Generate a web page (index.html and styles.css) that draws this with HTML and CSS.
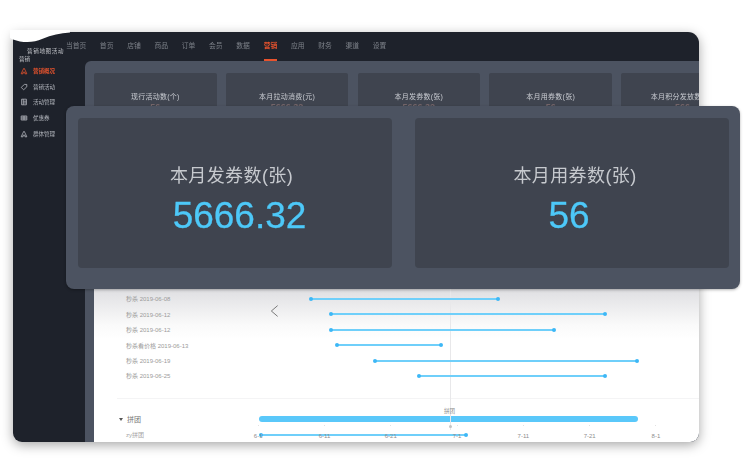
FILE: index.html
```html
<!DOCTYPE html>
<html lang="zh-CN">
<head>
    <meta charset="UTF-8">
    <meta name="viewport" content="width=device-width, initial-scale=1.0">
    <title>营销概况</title>
    <link rel="stylesheet" href="styles.css">
</head>
<body>

<div class="stage">
    <div class="window">
        <aside class="sidebar">
            <div class="brand">
                <div class="brand-name">营销地图活动</div>
                <div class="brand-sub">营销</div>
            </div>
            <ul class="side-menu">
                <li class="side-item active">
                    <svg viewBox="0 0 10 10"><path d="M1.500 8.500 3.500 4 5 1.500 6.500 4 8.500 8.500H6.200V6.500H3.800V8.500Z"/></svg>
                    营销概况
                </li>
                <li class="side-item">
                    <svg viewBox="0 0 10 10"><path d="M1.500 5.500 5.500 1.800H8.500V4.800L4.500 8.500Z"/></svg>
                    营销活动
                </li>
                <li class="side-item">
                    <svg viewBox="0 0 10 10"><path d="M2 1.500H8V8.500H2ZM4 1.500V8.500M4 4H8M4 6.200H8"/></svg>
                    活动管理
                </li>
                <li class="side-item">
                    <svg viewBox="0 0 10 10"><path d="M1.500 2.500H8.500V7.500H1.500ZM4 2.500V7.500M6 2.500V7.500M1.500 5H8.500"/></svg>
                    优惠券
                </li>
                <li class="side-item">
                    <svg viewBox="0 0 10 10"><path d="M1.500 8.500 3.500 4 5 1.500 6.500 4 8.500 8.500H6.200V6.500H3.800V8.500Z"/></svg>
                    群体管理
                </li>
            </ul>
        </aside>

        <div class="main">
            <nav class="top-nav">
                <a class="nav-first">当首页</a>
                <a>首页</a>
                <a>店铺</a>
                <a>商品</a>
                <a>订单</a>
                <a>会员</a>
                <a>数据</a>
                <a class="active">营销</a>
                <a>应用</a>
                <a>财务</a>
                <a>渠道</a>
                <a>设置</a>
            </nav>

            <div class="content">
                <div class="small-cards">
                    <div class="small-card"><p>现行活动数(个)</p><b>56</b></div>
                    <div class="small-card"><p>本月拉动消费(元)</p><b>5666.32</b></div>
                    <div class="small-card"><p>本月发券数(张)</p><b>5666.32</b></div>
                    <div class="small-card"><p>本月用券数(张)</p><b>56</b></div>
                    <div class="small-card"><p>本月积分发放数(分)</p><b>566</b></div>
                </div>

                <section class="chart">
                    <div class="today-line"></div>
                    <span class="today-label">拼团</span>
                    <span class="today-dot"></span>
                    <svg class="chart-back" viewBox="0 0 10 14"><path d="M8.500 1 1.500 7 8.500 13"/></svg>

                    <div class="gantt-list">
                        <div class="gantt-row"><span class="gantt-label">秒杀 2019-06-08</span><div class="track"><i class="bar" style="margin-left:52px;width:187px"></i></div></div>
                        <div class="gantt-row"><span class="gantt-label">秒杀 2019-06-12</span><div class="track"><i class="bar" style="margin-left:72px;width:274px"></i></div></div>
                        <div class="gantt-row"><span class="gantt-label">秒杀 2019-06-12</span><div class="track"><i class="bar" style="margin-left:72px;width:223px"></i></div></div>
                        <div class="gantt-row"><span class="gantt-label">秒杀看价格 2019-06-13</span><div class="track"><i class="bar" style="margin-left:78px;width:104px"></i></div></div>
                        <div class="gantt-row"><span class="gantt-label">秒杀 2019-06-19</span><div class="track"><i class="bar" style="margin-left:116px;width:262px"></i></div></div>
                        <div class="gantt-row"><span class="gantt-label">秒杀 2019-06-25</span><div class="track"><i class="bar" style="margin-left:160px;width:186px"></i></div></div>
                    </div>

                    <div class="gantt-group">
                        <div class="group-row">
                            <span class="group-label"><em></em>拼团</span>
                            <div class="track"><i class="group-bar" style="width:379px"></i></div>
                        </div>
                        <div class="gantt-row sub-row">
                            <span class="gantt-label">zy拼团</span>
                            <div class="track"><i class="bar" style="margin-left:2px;width:205px"></i></div>
                        </div>
                    </div>

                    <div class="axis">
                        <span>6-1</span>
                        <span>6-11</span>
                        <span>6-21</span>
                        <span>7-1</span>
                        <span>7-11</span>
                        <span>7-21</span>
                        <span>8-1</span>
                    </div>
                </section>
            </div>
        </div>
    </div>

    <svg class="corner-patch" viewBox="0 0 60 16"><path d="M0 0H60V2.500C50 3 42 5 32 9 24 13 12 13 3 9.500L0 8Z"/></svg>

    <div class="big-panel">
        <div class="big-card card-issued">
            <p>本月发券数(张)</p>
            <b>5666.32</b>
        </div>
        <div class="big-card card-used">
            <p>本月用券数(张)</p>
            <b>56</b>
        </div>
    </div>
</div>

</body>
</html>
```

FILE: styles.css
```css
* {
    box-sizing: border-box;
}

html, body {
    margin: 0;
    height: 100%;
    background: white;
    overflow: hidden;
}

body {
    font-family: "Liberation Sans", "Noto Sans CJK SC", sans-serif;
}

.stage {
    position: relative;
    width: 750px;
    height: 464px;
    padding: 32px 0 0 13px;
}

/* back window */
.window {
    display: flex;
    width: 686px;
    height: 410px;
    background-color: #1e222b;
    border-radius: 3px 11px 9px 9px;
    box-shadow: 0 3px 12px rgba(0, 0, 0, 0.35);
    overflow: hidden;
    filter: blur(0.6px);
}

.sidebar {
    width: 72px;
    flex: none;
    color: #b5b8bf;
    font-size: 5.5px;
}

.brand {
    height: 31px;
    padding-top: 15px;
}

.brand-name {
    margin-left: 14px;
    line-height: 8px;
    letter-spacing: 0.7px;
    white-space: nowrap;
    color: #c6c8cd;
}

.brand-sub {
    margin-left: 6px;
    line-height: 8px;
    color: #c6c8cd;
}

.side-menu {
    list-style: none;
    margin: 0;
    padding: 0;
}

.side-item {
    display: flex;
    align-items: center;
    gap: 5px;
    height: 15.8px;
    padding-left: 7px;
}

.side-item svg {
    width: 8px;
    height: 8px;
    fill: none;
    stroke: #b5b8bf;
    stroke-width: 1;
}

.side-item.active {
    color: #e8532d;
    font-weight: bold;
}

.side-item.active svg {
    stroke: #e8532d;
}

.main {
    flex: 1;
    min-width: 0;
    display: flex;
    flex-direction: column;
}

.top-nav {
    display: flex;
    height: 29px;
    margin-left: -19px;
    flex: none;
}

.top-nav a {
    width: 27.3px;
    flex: none;
    padding-top: 9px;
    text-align: center;
    font-size: 6.8px;
    line-height: 10px;
    color: #7d8189;
}

.top-nav .nav-first {
    width: 20px;
    margin-right: 7px;
    white-space: nowrap;
}

.top-nav a.active {
    color: #e8532d;
    font-weight: bold;
    background: linear-gradient(#e8532d, #e8532d) center bottom / 13px 2px no-repeat;
}

.content {
    flex: 1;
    min-height: 0;
    padding: 12px 0 0 9px;
    background-color: #4c5361;
    border-top-left-radius: 6px;
    overflow: hidden;
}

.small-cards {
    display: flex;
    gap: 9.3px;
    height: 208px;
    margin-bottom: 8px;
}

.small-card {
    width: 122.5px;
    flex: none;
    padding-top: 17.5px;
    text-align: center;
    background-color: #3f444f;
    border-radius: 2px;
    white-space: nowrap;
    overflow: hidden;
}

.small-card p {
    margin: 0;
    font-size: 7px;
    line-height: 12px;
    letter-spacing: 0.25px;
    color: #c9ccd2;
}

.small-card b {
    display: block;
    margin-top: -1px;
    font-size: 9px;
    line-height: 11px;
    color: #75666a;
}

/* white gantt area */
.chart {
    position: relative;
    height: 153px;
    padding-top: 2.3px;
    background: linear-gradient(#dfdfe2, #fafafa 36px, white 50px);
    color: #9b9b9b;
}

.gantt-row {
    display: flex;
    align-items: center;
    height: 15.4px;
}

.gantt-label {
    width: 165px;
    flex: none;
    padding-left: 32px;
    font-size: 6px;
    white-space: nowrap;
}

.track {
    flex: 1;
    min-width: 0;
    display: flex;
    align-items: center;
}

.bar {
    position: relative;
    display: block;
    height: 2px;
    background-color: #6fcffa;
}

.bar::before,
.bar::after {
    content: "";
    position: absolute;
    top: -1px;
    width: 4px;
    height: 4px;
    border-radius: 50%;
    background-color: #3db7f6;
}

.bar::before {
    left: -2px;
}

.bar::after {
    right: -2px;
}

.gantt-group {
    margin: 14px 0 0 23px;
    padding-top: 14.5px;
    border-top: 1px solid #f4f4f5;
}

.group-row {
    display: flex;
    align-items: center;
    height: 12px;
    margin-bottom: 2px;
}

.group-label {
    display: flex;
    align-items: center;
    gap: 4px;
    width: 142px;
    flex: none;
    padding-left: 2px;
    font-size: 7px;
    color: #777;
}

.group-label em {
    width: 0;
    height: 0;
    border-left: 2px solid transparent;
    border-right: 2px solid transparent;
    border-top: 3px solid #555;
}

.group-bar {
    display: block;
    height: 6.5px;
    border-radius: 4px;
    background-color: #5ac8fa;
}

.sub-row {
    margin-left: -23px;
}

.sub-row .gantt-label {
    padding-left: 32px;
    color: #a5a5a5;
}

/* overlays inside the chart */
.today-line {
    position: absolute;
    left: 355.5px;
    top: 0;
    width: 1.5px;
    height: 141px;
    background-color: #e8e8ea;
}

.today-label {
    position: absolute;
    left: 350px;
    top: 118px;
    font-size: 5.5px;
    line-height: 8px;
    color: #8a8a8a;
}

.today-dot {
    position: absolute;
    left: 355px;
    top: 136px;
    width: 3px;
    height: 3px;
    border-radius: 50%;
    background-color: #c4c4c4;
}

.chart-back {
    position: absolute;
    left: 176px;
    top: 15px;
    width: 9px;
    height: 14px;
    fill: none;
    stroke: #777;
    stroke-width: 1.1;
}

.axis {
    position: absolute;
    left: 131px;
    top: 136px;
    display: grid;
    grid-template-columns: repeat(7, 66.3px);
    text-align: center;
    font-size: 6px;
    line-height: 8px;
    color: #8e8e8e;
}

.axis span::before {
    content: "";
    display: block;
    width: 1px;
    height: 1px;
    margin: 0 auto 6px;
    background-color: #e2e2e2;
}

/* front panel */
.corner-patch {
    position: absolute;
    left: 10px;
    top: 30px;
    width: 60px;
    height: 16px;
    fill: white;
}

.big-panel {
    position: absolute;
    left: 66px;
    top: 106px;
    display: flex;
    gap: 23px;
    width: 674px;
    height: 183px;
    padding: 12px 11px 21px 12px;
    background-color: #4c5361;
    border-radius: 8px;
    box-shadow: 0 1px 3px rgba(0, 0, 0, 0.3);
    filter: blur(0.25px);
}

.big-card {
    width: 314px;
    flex: none;
    padding-top: 46px;
    text-align: center;
    background-color: #3f444f;
    border-radius: 4px;
}

.big-card p {
    margin: 0;
    font-size: 18px;
    line-height: 24px;
    letter-spacing: 0.4px;
    color: #c6c9ce;
}

.big-card b {
    display: block;
    margin-top: 6px;
    font-size: 37px;
    font-weight: normal;
    line-height: 44px;
    color: #4dc8f8;
    -webkit-text-stroke: 0.3px #4dc8f8;
}

.card-issued p {
    padding-right: 7px;
}

.card-issued b {
    padding-left: 9px;
}

.card-used p {
    padding-left: 6px;
}

.card-used b {
    padding-right: 6px;
}
```
